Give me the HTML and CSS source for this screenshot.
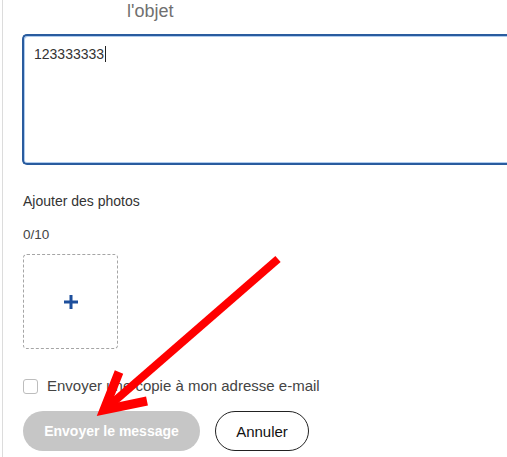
FILE: index.html
```html
<!DOCTYPE html>
<html lang="fr">
<head>
<meta charset="utf-8">
<title>Message</title>
<link rel="stylesheet" href="styles.css">
</head>
<body>
<div class="page">
  <div class="form">
    <div class="subject">l'objet</div>
    <div class="textarea"><span class="value">123333333</span><span class="caret"></span></div>
    <div class="label">Ajouter des photos</div>
    <div class="count">0/10</div>
    <div class="photo-add">
      <svg width="14" height="14" viewBox="0 0 14 14" aria-hidden="true"><rect x="0" y="5.5" width="14" height="3" fill="#1d4f9c"/><rect x="5.5" y="0" width="3" height="14" fill="#1d4f9c"/></svg>
    </div>
    <label class="check-row"><span class="checkbox"></span><span class="check-text">Envoyer une copie à mon adresse e-mail</span></label>
    <div class="actions">
      <button class="btn btn-send" type="button">Envoyer le message</button>
      <button class="btn btn-cancel" type="button">Annuler</button>
    </div>
  </div>
</div>
<svg class="annotation" width="507" height="457" viewBox="0 0 507 457" aria-hidden="true">
  <line x1="278" y1="259" x2="110" y2="405" stroke="#f00" stroke-width="8"/>
  <polyline points="119,372 104,410 147,401" fill="none" stroke="#f00" stroke-width="9" stroke-linejoin="miter"/>
</svg>
</body>
</html>
```
FILE: styles.css
```css
html, body {
  margin: 0;
  padding: 0;
  background: #fff;
  overflow: hidden;
  width: 507px;
  height: 457px;
}
body {
  font-family: "Liberation Sans", Arial, sans-serif;
  color: #333;
  position: relative;
}
.page {
  margin-left: 2px;
  border-left: 1px solid #dcdcdc;
  min-height: 457px;
}
.form {
  padding-left: 20px;
  display: flex;
  flex-direction: column;
  align-items: flex-start;
}
.subject {
  font-size: 18px;
  line-height: 20px;
  color: #707070;
  padding-top: 1px;
  margin-left: 104px;
}
.textarea {
  margin-top: 13px;
  margin-left: -1px;
  width: 485px;
  height: 131px;
  box-sizing: border-box;
  border: 2px solid #295c9f;
  border-right: none;
  border-radius: 5px 0 0 5px;
  box-shadow: inset 1px 1px 0 0 #aecbee, inset 0 -1px 0 0 #aecbee;
  padding: 10px 10px;
  font-size: 14px;
  line-height: 16px;
  color: #333;
  display: flex;
  align-items: flex-start;
}
.caret {
  display: inline-block;
  width: 1px;
  height: 16px;
  background: #222;
  margin-left: 1px;
}
.label {
  margin-top: 28px;
  font-size: 14px;
  line-height: 16px;
  color: #333;
}
.count {
  margin-top: 18px;
  font-size: 13.5px;
  line-height: 16px;
  color: #444;
}
.photo-add {
  margin-top: 11px;
  width: 95px;
  height: 95px;
  box-sizing: border-box;
  border: 1px dashed #a5a5a5;
  border-radius: 4px;
  display: flex;
  align-items: center;
  justify-content: center;
}
.check-row {
  margin-top: 28px;
  display: flex;
  align-items: center;
  gap: 9px;
}
.checkbox {
  width: 15px;
  height: 15px;
  box-sizing: border-box;
  border: 1px solid #bdbdbd;
  border-radius: 3px;
  background: #fff;
}
.check-text {
  font-size: 15px;
  line-height: 18px;
  color: #444;
}
.actions {
  margin-top: 16px;
  display: flex;
  gap: 15px;
}
.btn {
  font-family: "Liberation Sans", Arial, sans-serif;
  height: 40px;
  border-radius: 20px;
  box-sizing: border-box;
  padding: 0;
}
.btn-send {
  width: 177px;
  border: none;
  background: #c6c6c6;
  color: #fff;
  font-weight: bold;
  font-size: 14px;
}
.btn-cancel {
  width: 94px;
  border: 1px solid #222;
  background: #fff;
  color: #111;
  font-size: 15px;
}
.annotation {
  position: absolute;
  left: 0;
  top: 0;
  pointer-events: none;
}
```
